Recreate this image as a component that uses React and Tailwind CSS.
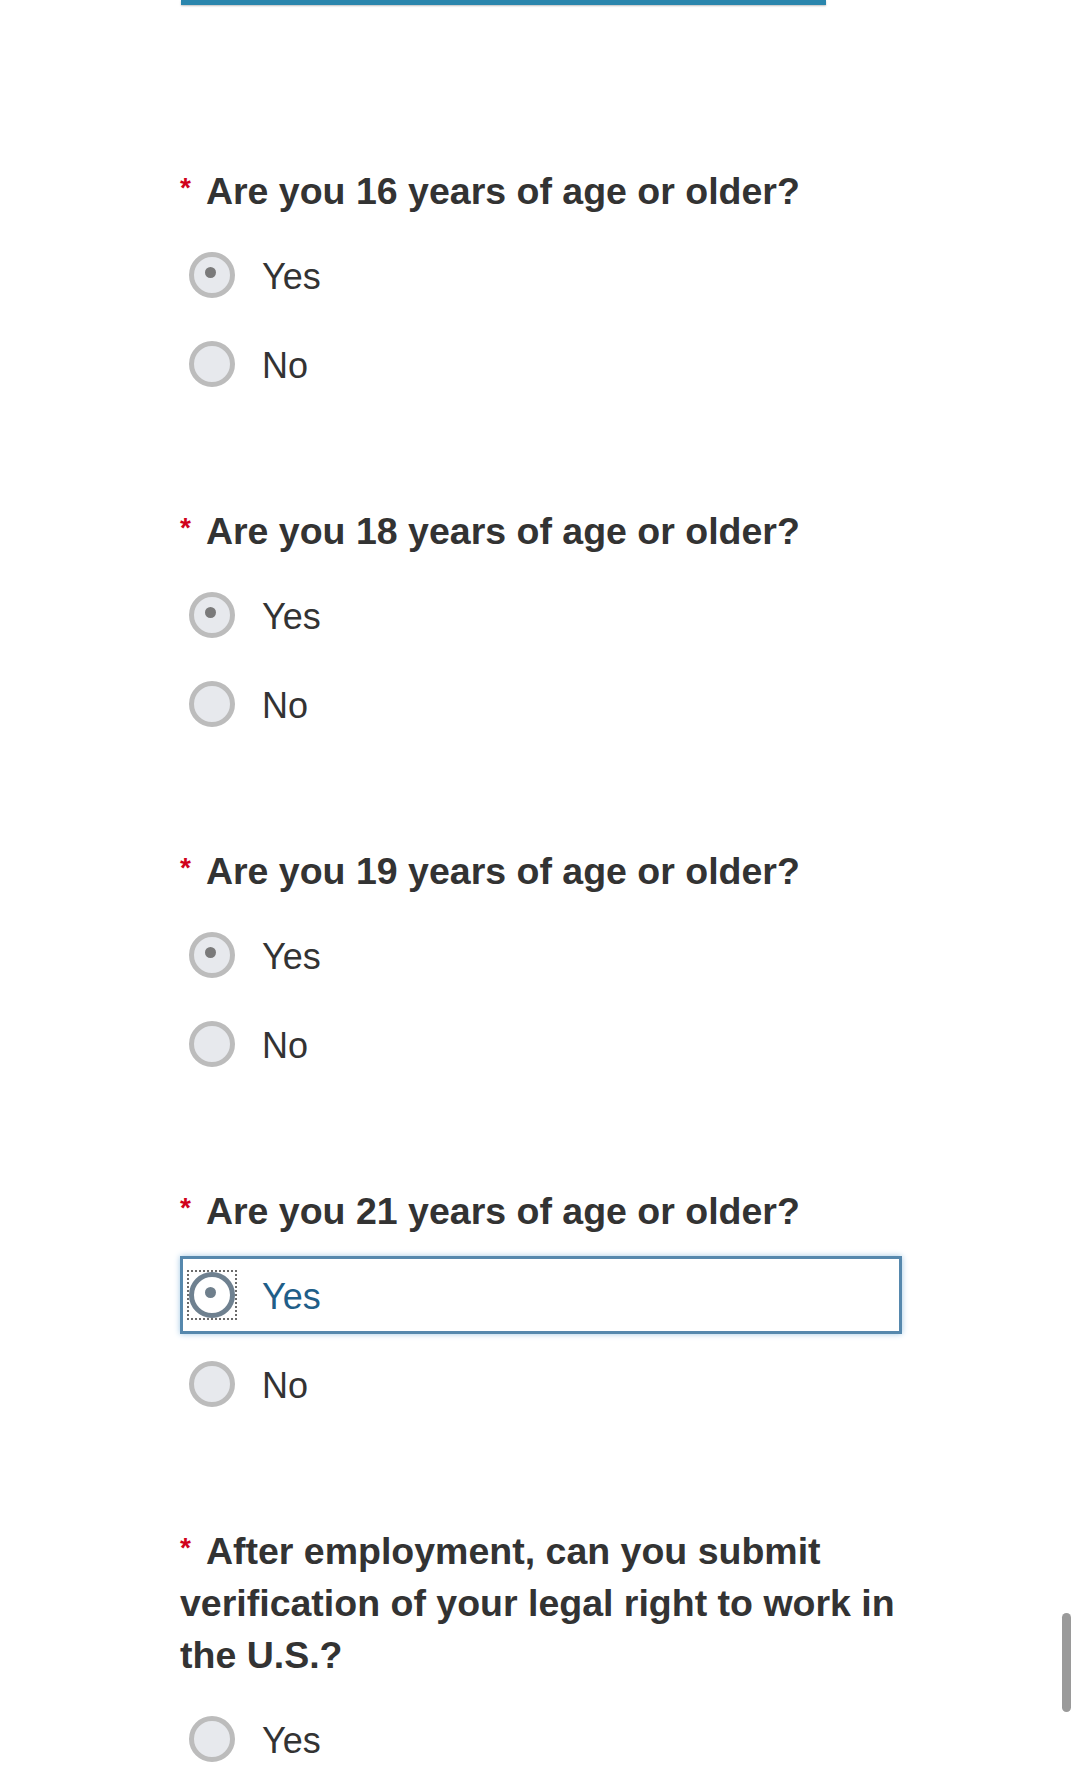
import React from "react";

function Radio({ checked, focused }) {
  if (focused) {
    return (
      <div className="relative w-[46px] h-[46px] shrink-0">
        <div className="absolute inset-[-2px] border-2 border-dotted border-[#6b6b6b]" />
        <div className="w-[46px] h-[46px] rounded-full border-[5px] border-[#6f8190] bg-white flex items-center justify-center">
          <div className="w-[11px] h-[11px] rounded-full bg-[#6f7f8c] -translate-x-[2px] -translate-y-[3px]" />
        </div>
      </div>
    );
  }
  return (
    <div className="w-[46px] h-[46px] shrink-0 rounded-full border-[5px] border-[#bcbcbc] bg-[#e7e9ed] flex items-center justify-center">
      {checked && (
        <div className="w-[11px] h-[11px] rounded-full bg-[#7a7a7a] -translate-x-[2px] -translate-y-[3px]" />
      )}
    </div>
  );
}

function Option({ label, checked, focused }) {
  return (
    <div
      className={
        focused
          ? "h-[78px] flex items-center gap-[27px] pl-[6px] border-[3px] border-[#5688ad] shadow-[0_0_6px_#a3c8e4]"
          : "h-[78px] flex items-center gap-[27px] pl-[6px] border-[3px] border-transparent"
      }
    >
      <Radio checked={checked} focused={focused} />
      <span
        className={
          focused
            ? "text-[36px] text-[#1f5e88] leading-none pt-[3px]"
            : "text-[36px] text-[#333333] leading-none pt-[3px]"
        }
      >
        {label}
      </span>
    </div>
  );
}

function Question({ children, yesChecked, yesFocused, noOption = true }) {
  return (
    <div className="flex flex-col">
      <div className="text-[37.5px] font-bold leading-[52px] text-[#333333]">
        <span className="inline-block text-[#d0021b] text-[28px] leading-[28px] align-top mt-[9px] mr-[15px]">*</span>
        {children}
      </div>
      <div className="flex flex-col gap-[11px] mt-[19px]">
        <Option label="Yes" checked={yesChecked} focused={yesFocused} />
        {noOption && <Option label="No" />}
      </div>
    </div>
  );
}

export default function App() {
  return (
    <div
      className="relative w-[1080px] h-[1775px] overflow-hidden bg-white"
      style={{ fontFamily: '"Liberation Sans", Arial, Helvetica, sans-serif' }}
    >
      <div className="ml-[181px] w-[645px] h-[5px] bg-[#2a86ad] shadow-[0_1px_2px_rgba(0,0,0,0.25)]" />
      <div className="ml-[180px] w-[722px] pt-[160px] flex flex-col gap-[102px]">
        <Question yesChecked>Are you 16 years of age or older?</Question>
        <Question yesChecked>Are you 18 years of age or older?</Question>
        <Question yesChecked>Are you 19 years of age or older?</Question>
        <Question yesChecked yesFocused>Are you 21 years of age or older?</Question>
        <Question noOption={false}>
          After employment, can you submit verification of your legal right to work in the U.S.?
        </Question>
      </div>
      <div className="absolute left-[1062px] top-[1613px] w-[9px] h-[99px] rounded-full bg-[#9a9a9a]" />
    </div>
  );
}
